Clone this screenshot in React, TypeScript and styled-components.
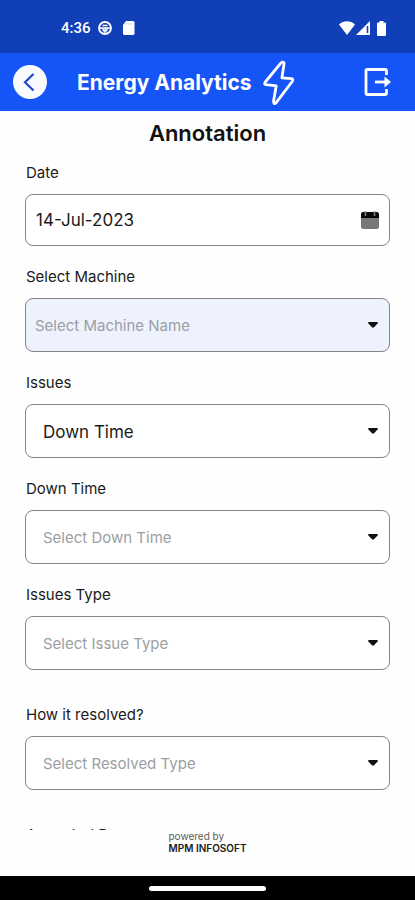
import React from "react";
import styled, { createGlobalStyle } from "styled-components";

const GlobalStyle = createGlobalStyle`
  *, *::before, *::after { box-sizing: border-box; }
  body {
    margin: 0;
    background: #fefefe;
    color: #1a1a1a;
    font-family: Inter, Roboto, sans-serif;
  }
`;

const Screen = styled.div`
  display: flex;
  flex-direction: column;
  height: 100vh;
  overflow: hidden;
`;

const StatusBar = styled.div`
  flex: none;
  display: flex;
  align-items: center;
  justify-content: space-between;
  height: 53px;
  padding: 3px 28px 0 61px;
  background: #113fb7;
  color: #fff;
`;

const StatusGroup = styled.div<{ $gap: number }>`
  display: flex;
  align-items: center;
  gap: ${(p) => p.$gap}px;
`;

const Clock = styled.span`
  font: 500 15px/20px Roboto, sans-serif;
`;

const AppBar = styled.header`
  flex: none;
  display: flex;
  align-items: center;
  height: 58px;
  padding: 0 24px 0 13px;
  background: #1554f6;
  color: #fff;
`;

const IconButton = styled.button`
  display: flex;
  padding: 0;
  border: 0;
  background: none;
  color: inherit;
  cursor: pointer;
`;

const AppName = styled.div`
  display: flex;
  flex: 1;
  align-items: center;
  gap: 10px;
  margin-left: 30px;
  padding-top: 2px;
  font-size: 21px;
  font-weight: 700;
  line-height: 28px;
  white-space: nowrap;
`;

const Content = styled.main`
  flex: 1;
  min-height: 0;
  overflow: hidden;
  padding: 8px 25px 0;
`;

const PageTitle = styled.h1`
  margin: 0 0 16px;
  font-size: 22px;
  font-weight: 600;
  line-height: 28px;
  text-align: center;
  color: #111;
`;

const Form = styled.form`
  display: flex;
  flex-direction: column;
  gap: 21px;
`;

const Field = styled.div<{ $spaced?: boolean }>`
  display: flex;
  flex-direction: column;
  gap: 11px;
  margin-top: ${(p) => (p.$spaced ? 14 : 0)}px;
`;

const Label = styled.label`
  padding-left: 1px;
  font-size: 15px;
  line-height: 20px;
`;

const Control = styled.div`
  display: grid;
  align-items: center;
  > * { grid-area: 1 / 1; }
  > svg { justify-self: end; pointer-events: none; }
`;

const DateInput = styled.input`
  width: 100%;
  height: 52px;
  padding: 0 44px 0 10px;
  border: 1px solid #858585;
  border-radius: 8px;
  background: #fff;
  color: #1a1a1a;
  font: 400 17px/24px Inter, sans-serif;
`;

const Select = styled.select<{ $tinted?: boolean; $empty: boolean }>`
  appearance: none;
  width: 100%;
  height: 54px;
  padding: 2px 36px 0 ${(p) => (p.$tinted ? 9 : 17)}px;
  border: 1px solid #858585;
  border-radius: 8px;
  background: ${(p) => (p.$tinted ? "#eef2ff" : "#fff")};
  color: ${(p) => (p.$empty ? "#9c9ea3" : "#1a1a1a")};
  font: 400 ${(p) => (p.$empty ? 15 : 17)}px/24px Inter, sans-serif;
`;

const Caret = styled.svg`
  margin-right: 12px;
`;

const CalendarIcon = styled.svg`
  margin-right: 11px;
`;

const Footer = styled.footer`
  flex: none;
  display: flex;
  justify-content: center;
  height: 46px;
  background: #fefefe;
`;

const Credit = styled.div`
  font-size: 10px;
  line-height: 12px;
  color: #5c5c5c;
`;

const Company = styled.div`
  font-weight: 600;
  color: #1a1a1a;
`;

const NavigationBar = styled.div`
  flex: none;
  display: flex;
  align-items: center;
  justify-content: center;
  height: 24px;
  background: #000;
`;

const HomeIndicator = styled.div`
  width: 28%;
  height: 5px;
  border-radius: 3px;
  background: #fff;
`;

type SelectFieldProps = {
  id: string;
  label: string;
  placeholder: string;
  value?: string;
  tinted?: boolean;
  spaced?: boolean;
};

function SelectField({ id, label, placeholder, value = "", tinted, spaced }: SelectFieldProps) {
  const [current, setCurrent] = React.useState(value);
  return (
    <Field $spaced={spaced}>
      <Label htmlFor={id}>{label}</Label>
      <Control>
        <Select
          id={id}
          value={current}
          onChange={(e) => setCurrent(e.target.value)}
          $tinted={tinted}
          $empty={!current}
        >
          <option value="">{placeholder}</option>
          {value && <option value={value}>{value}</option>}
        </Select>
        <Caret width="10" height="6" viewBox="0 0 10 6" aria-hidden="true">
          <path d="M1 0h8c1 0 1.2 1 .6 1.6L6 5.3c-.6.6-1.4.6-2 0L.4 1.6C-.2 1 0 0 1 0Z" fill="#111" />
        </Caret>
      </Control>
    </Field>
  );
}

export default function App() {
  return (
    <>
      <GlobalStyle />
      <Screen>
        <StatusBar>
          <StatusGroup $gap={7}>
            <Clock>4:36</Clock>
            <svg width="14" height="14" viewBox="0 0 14 14" fill="none" stroke="#fff" aria-hidden="true">
              <circle cx="7" cy="7" r="6" strokeWidth="1.8" />
              <path d="M1 7h12M4.500 4.500h5M7 7.500v5M4.500 7.500 6 10.500M9.500 7.500 8 10.500" strokeWidth="1.4" />
            </svg>
            <svg width="16" height="14" viewBox="3 0 16 14" aria-hidden="true">
              <path d="M10 0h7q1.500 0 1.500 1.500v11q0 1.500-1.500 1.500H8.500Q7 14 7 12.500V4l3-4Z" fill="#fff" />
              <path d="M10.500 2v1.800M12.800 2v1.800M15 2v1.800" stroke="#b8c8f0" strokeWidth="1" />
            </svg>
          </StatusGroup>
          <StatusGroup $gap={1}>
            <svg width="16" height="14" viewBox="0 0 16 14" aria-hidden="true">
              <path d="M0 3.400C4.500-.8 11.500-.8 16 3.400L8 14Z" fill="#fff" />
            </svg>
            <svg width="14" height="14" viewBox="0 0 14 14" aria-hidden="true">
              <path d="M14 0v14H0Z" fill="#fff" />
              <path d="M11.500 5v7" stroke="#113fb7" strokeWidth="1.600" />
            </svg>
            <svg width="16" height="15" viewBox="0 0 16 15" aria-hidden="true">
              <path d="M8.500 0h4v1.500H14q1 0 1 1V14q0 1-1 1H7q-1 0-1-1V2.500q0-1 1-1h1.500Z" fill="#fff" />
            </svg>
          </StatusGroup>
        </StatusBar>
        <AppBar>
          <IconButton type="button" aria-label="Back">
            <svg width="34" height="34" viewBox="0 0 34 34" fill="none">
              <circle cx="17" cy="17" r="17" fill="#f9fbff" />
              <path d="M20.500 9 12 17.300 20.500 25.500" stroke="#1f45cf" strokeWidth="2.200" />
            </svg>
          </IconButton>
          <AppName>
            Energy Analytics
            <svg width="33" height="46" viewBox="0 0 33 46" fill="none" stroke="#fff" strokeWidth="2.800" strokeLinejoin="round" aria-hidden="true">
              <path d="M18.600 3.300 3.300 22c-1.300 1.700-.7 2.500.8 2.700l10.100 1.100-2.600 15.300c-.5 2.900 1.200 3.300 2.600 1.500L30.200 21.500c1.200-1.500.7-2.600-.8-2.800l-9.500-.9L22 4.300c.4-2.600-1.900-2.900-3.400-1Z" />
            </svg>
          </AppName>
          <IconButton type="button" aria-label="Log out">
            <svg width="28" height="30" viewBox="0 0 28 30" fill="none" stroke="#fff" strokeWidth="2.800">
              <path d="M23.500 8V3.500q0-1-1-1H4q-1 0-1 1v23q0 1 1 1h18.500q1 0 1-1V22" />
              <path d="M12 15h12" />
              <path d="m21.500 9.500 6.500 5.500-6.500 5.500Z" fill="#fff" stroke="none" />
            </svg>
          </IconButton>
        </AppBar>
        <Content>
          <PageTitle>Annotation</PageTitle>
          <Form>
            <Field>
              <Label htmlFor="date">Date</Label>
              <Control>
                <DateInput id="date" type="text" defaultValue="14-Jul-2023" />
                <CalendarIcon width="18" height="18" viewBox="0 0 18 18" aria-hidden="true">
                  <rect y="1" width="18" height="17" rx="2.500" fill="#777" />
                  <path d="M0 7V3.500Q0 1 2.500 1h13Q18 1 18 3.500V7Z" fill="#080808" />
                  <path d="M4.500 0v5M13.500 0v5" stroke="#888" strokeWidth="1.500" />
                </CalendarIcon>
              </Control>
            </Field>
            <SelectField id="machine" label="Select Machine" placeholder="Select Machine Name" tinted />
            <SelectField id="issues" label="Issues" placeholder="Select Issue" value="Down Time" />
            <SelectField id="down-time" label="Down Time" placeholder="Select Down Time" />
            <SelectField id="issue-type" label="Issues Type" placeholder="Select Issue Type" />
            <SelectField id="resolved" label="How it resolved?" placeholder="Select Resolved Type" spaced />
            <SelectField id="accepted" label="Accepted By" placeholder="Select Name" spaced />
          </Form>
        </Content>
        <Footer>
          <Credit>
            powered by
            <Company>MPM INFOSOFT</Company>
          </Credit>
        </Footer>
        <NavigationBar>
          <HomeIndicator />
        </NavigationBar>
      </Screen>
    </>
  );
}
